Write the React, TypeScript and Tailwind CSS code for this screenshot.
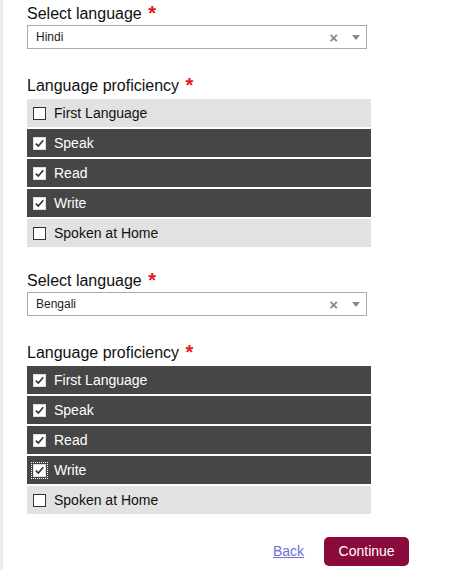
import React from 'react';

type Item = { label: string; checked: boolean; focus?: boolean };

function Box({ checked, dark, focus }: { checked: boolean; dark: boolean; focus?: boolean }) {
  return (
    <span
      className={`relative flex h-[13px] w-[13px] shrink-0 items-center justify-center bg-white ${dark ? 'border border-[#dcdcdc]' : 'border border-[#333333]'} ${focus ? 'outline outline-1 outline-dotted outline-offset-[1px] outline-[#ffffff]' : ''}`}
    >
      {checked && (
        <svg width="11" height="11" viewBox="0 0 11 11">
          <path d="M1.8 5.6 L4.3 8.1 L9.3 2.2" fill="none" stroke="#333333" strokeWidth="1.6" />
        </svg>
      )}
    </span>
  );
}

function Row({ item }: { item: Item }) {
  const dark = item.checked;
  return (
    <div
      className={`flex h-[28px] items-center gap-[8px] pl-[6px] text-[14px] ${dark ? 'bg-[#464646] text-white' : 'bg-[#e2e2e2] text-[#111111]'}`}
    >
      <Box checked={item.checked} dark={dark} focus={item.focus} />
      <span>{item.label}</span>
    </div>
  );
}

function Star() {
  return <span className="ml-[2px] align-[-1px] text-[20px] font-bold leading-none text-[#e8141b]">*</span>;
}

function Section({ value, items }: { value: string; items: Item[] }) {
  return (
    <div>
      <div className="mb-[2px] h-[20px] whitespace-nowrap text-[16px] leading-[20px] text-[#111111]">
        Select language <Star />
      </div>
      <div className="flex h-[24px] w-[340px] items-center border border-[#aaaaaa] bg-white pl-[8px] text-[12px] text-[#222222]">
        <span className="flex-1">{value}</span>
        <span className="mr-[14px] text-[15px] font-bold leading-none text-[#888888]">×</span>
        <svg width="8" height="5" viewBox="0 0 8 5" className="mr-[6px]">
          <path d="M0 0 L8 0 L4 5 Z" fill="#888888" />
        </svg>
      </div>
      <div className="mb-[4px] mt-[26px] h-[20px] whitespace-nowrap text-[16px] leading-[20px] text-[#111111]">
        Language proficiency <Star />
      </div>
      <div className="flex flex-col gap-[2px]">
        {items.map((it) => (
          <Row key={it.label} item={it} />
        ))}
      </div>
    </div>
  );
}

export default function App() {
  const first: Item[] = [
    { label: 'First Language', checked: false },
    { label: 'Speak', checked: true },
    { label: 'Read', checked: true },
    { label: 'Write', checked: true },
    { label: 'Spoken at Home', checked: false },
  ];
  const second: Item[] = [
    { label: 'First Language', checked: true },
    { label: 'Speak', checked: true },
    { label: 'Read', checked: true },
    { label: 'Write', checked: true, focus: true },
    { label: 'Spoken at Home', checked: false },
  ];
  return (
    <div className="min-h-[570px] border-l-[3px] border-[#ececec] bg-white font-['Liberation_Sans',Arial,sans-serif]">
      <div className="w-[368px] pl-[24px] pt-[3px]">
        <Section value="Hindi" items={first} />
        <div className="h-[23px]" />
        <Section value="Bengali" items={second} />
      </div>
      <div className="mt-[23px] flex items-center pl-[270px]">
        <a className="cursor-pointer text-[14px] text-[#6f6fd8] underline">Back</a>
        <button className="ml-[20px] h-[29px] w-[85px] rounded-[5px] bg-[#8a0a3c] text-[14px] text-white">
          Continue
        </button>
      </div>
    </div>
  );
}
